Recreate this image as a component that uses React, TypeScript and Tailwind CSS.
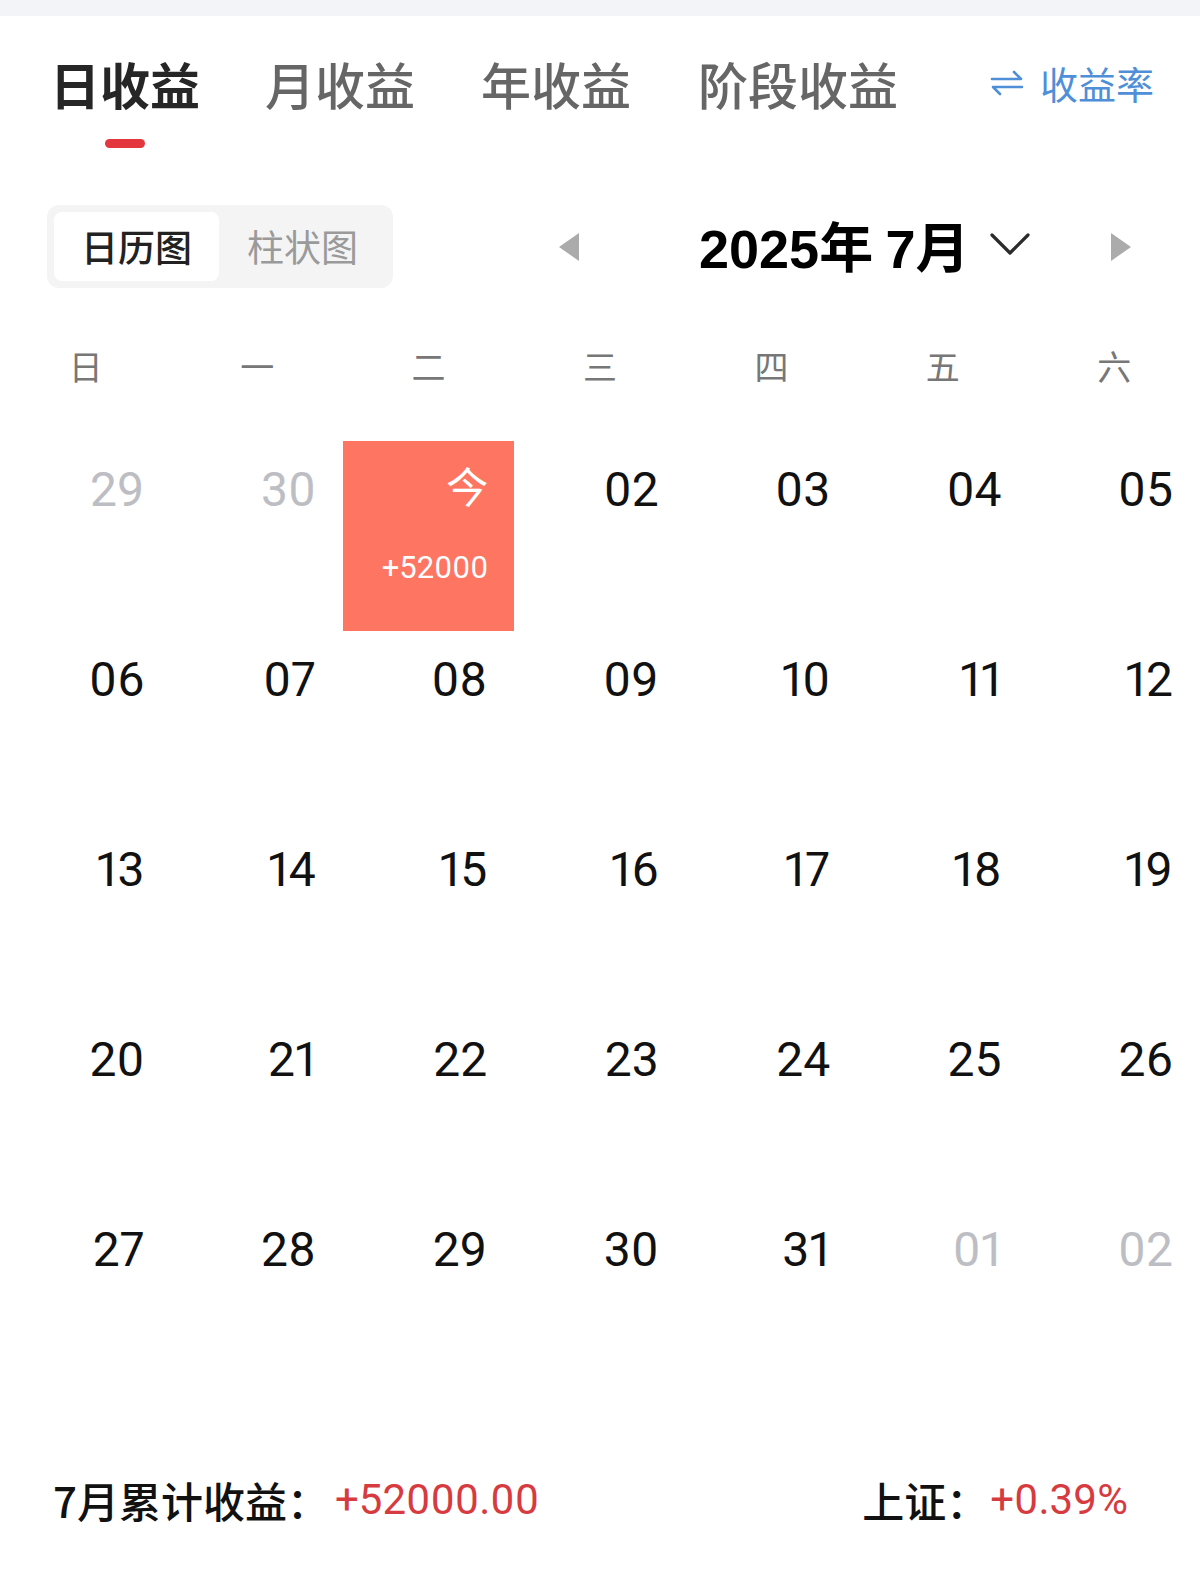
import React from "react";

const CJK = '"Noto Sans CJK SC", "Noto Sans", sans-serif';
const NUM = 'Roboto, "Noto Sans CJK SC", sans-serif';

type Day = { d: string; muted?: boolean; today?: boolean };

const rows: Day[][] = [
  [{ d: "29", muted: true }, { d: "30", muted: true }, { d: "01", today: true }, { d: "02" }, { d: "03" }, { d: "04" }, { d: "05" }],
  [{ d: "06" }, { d: "07" }, { d: "08" }, { d: "09" }, { d: "10" }, { d: "11" }, { d: "12" }],
  [{ d: "13" }, { d: "14" }, { d: "15" }, { d: "16" }, { d: "17" }, { d: "18" }, { d: "19" }],
  [{ d: "20" }, { d: "21" }, { d: "22" }, { d: "23" }, { d: "24" }, { d: "25" }, { d: "26" }],
  [{ d: "27" }, { d: "28" }, { d: "29" }, { d: "30" }, { d: "31" }, { d: "01", muted: true }, { d: "02", muted: true }],
];

const weekdays = ["日", "一", "二", "三", "四", "五", "六"];

function SwapIcon() {
  return (
    <svg width="34" height="26" viewBox="0 0 34 26" fill="none" stroke="#4f8fd7" strokeWidth="2.6" strokeLinecap="round" strokeLinejoin="round">
      <path d="M2 9 H31 L24 2" />
      <path d="M32 17 H3 L10 24" />
    </svg>
  );
}

export default function App() {
  return (
    <div className="w-[1200px] min-h-[1584px] bg-white" style={{ fontFamily: CJK }}>
      <div className="h-4 bg-[#f3f4f8]" />

      {/* Tabs */}
      <div className="mt-[42px] flex items-center pl-[50px] pr-[46px]">
        <span className="text-[50px] leading-none font-bold text-[#262626]">日收益</span>
        <span className="ml-[65px] text-[50px] leading-none font-medium text-[#666666]">月收益</span>
        <span className="ml-[66px] text-[50px] leading-none font-medium text-[#666666]">年收益</span>
        <span className="ml-[67px] text-[50px] leading-none font-medium text-[#666666]">阶段收益</span>
        <div className="ml-auto flex items-center gap-[16px] text-[#4f8fd7]">
          <SwapIcon />
          <span className="text-[38px] leading-none">收益率</span>
        </div>
      </div>
      <div className="mt-[31px] pl-[105px]">
        <div className="h-[9px] w-[40px] rounded-full bg-[#e3363d]" />
      </div>

      {/* Segmented + month nav */}
      <div className="mt-[57px] flex items-center">
        <div className="ml-[47px] flex h-[83px] w-[346px] items-center rounded-[12px] bg-[#f4f4f5] p-[7px]">
          <div className="flex h-full w-[165px] items-center justify-center rounded-[8px] bg-white text-[37px] font-medium text-[#222222]">
            日历图
          </div>
          <div className="flex h-full flex-1 items-center justify-center text-[37px] text-[#9a9a9a]">柱状图</div>
        </div>
        <div className="ml-[166px] h-0 w-0 border-y-[14px] border-r-[20px] border-y-transparent border-r-[#ababab]" />
        <span className="ml-[120px] text-[54px] leading-none font-bold text-black">
          <span style={{ fontFamily: '"Liberation Sans", sans-serif' }}>2025</span>年 <span style={{ fontFamily: '"Liberation Sans", sans-serif' }}>7</span>月
        </span>
        <svg className="ml-[20px] -mt-[6px]" width="42" height="26" viewBox="0 0 42 26" fill="none" stroke="#2b2b2b" strokeWidth="3.2" strokeLinecap="round" strokeLinejoin="round">
          <path d="M3 4 L21 22 L39 4" />
        </svg>
        <div className="ml-[80px] h-0 w-0 border-y-[14px] border-l-[20px] border-y-transparent border-l-[#ababab]" />
      </div>

      {/* Weekdays */}
      <div className="mt-[61px] grid grid-cols-7">
        {weekdays.map((w) => (
          <div key={w} className="text-center text-[34px] leading-none text-[#777777]">
            {w}
          </div>
        ))}
      </div>

      {/* Calendar grid */}
      <div className="mt-[58px] grid grid-cols-7" style={{ fontFamily: NUM }}>
        {rows.flat().map((day, i) =>
          day.today ? (
            <div key={i} className="flex h-[190px] flex-col items-end bg-[#fe7562] pr-[26px] pt-[23px] text-white">
              <span className="text-[42px] leading-none" style={{ fontFamily: CJK }}>今</span>
              <span className="mt-[46px] text-[31px] leading-none proportional-nums">+52000</span>
            </div>
          ) : (
            <div key={i} className="flex h-[190px] flex-col items-end pr-[27px] pt-[25px]">
              <span className={`text-[48px] leading-[48px] font-normal proportional-nums ${day.muted ? "text-[#bdbec4]" : "text-[#111111]"}`}>
                {day.d}
              </span>
            </div>
          )
        )}
      </div>

      {/* Footer */}
      <div className="mt-[88px] flex items-center pl-[53px] pr-[72px] text-[42px] leading-none">
        <span className="font-medium text-[#111111]">7月累计收益：</span>
        <span className="ml-[6px] text-[#d63b3f] proportional-nums" style={{ fontFamily: NUM }}>+52000.00</span>
        <span className="ml-auto font-medium text-[#111111]">上证：</span>
        <span className="ml-[2px] text-[#d63b3f] proportional-nums" style={{ fontFamily: NUM }}>+0.39%</span>
      </div>
    </div>
  );
}
